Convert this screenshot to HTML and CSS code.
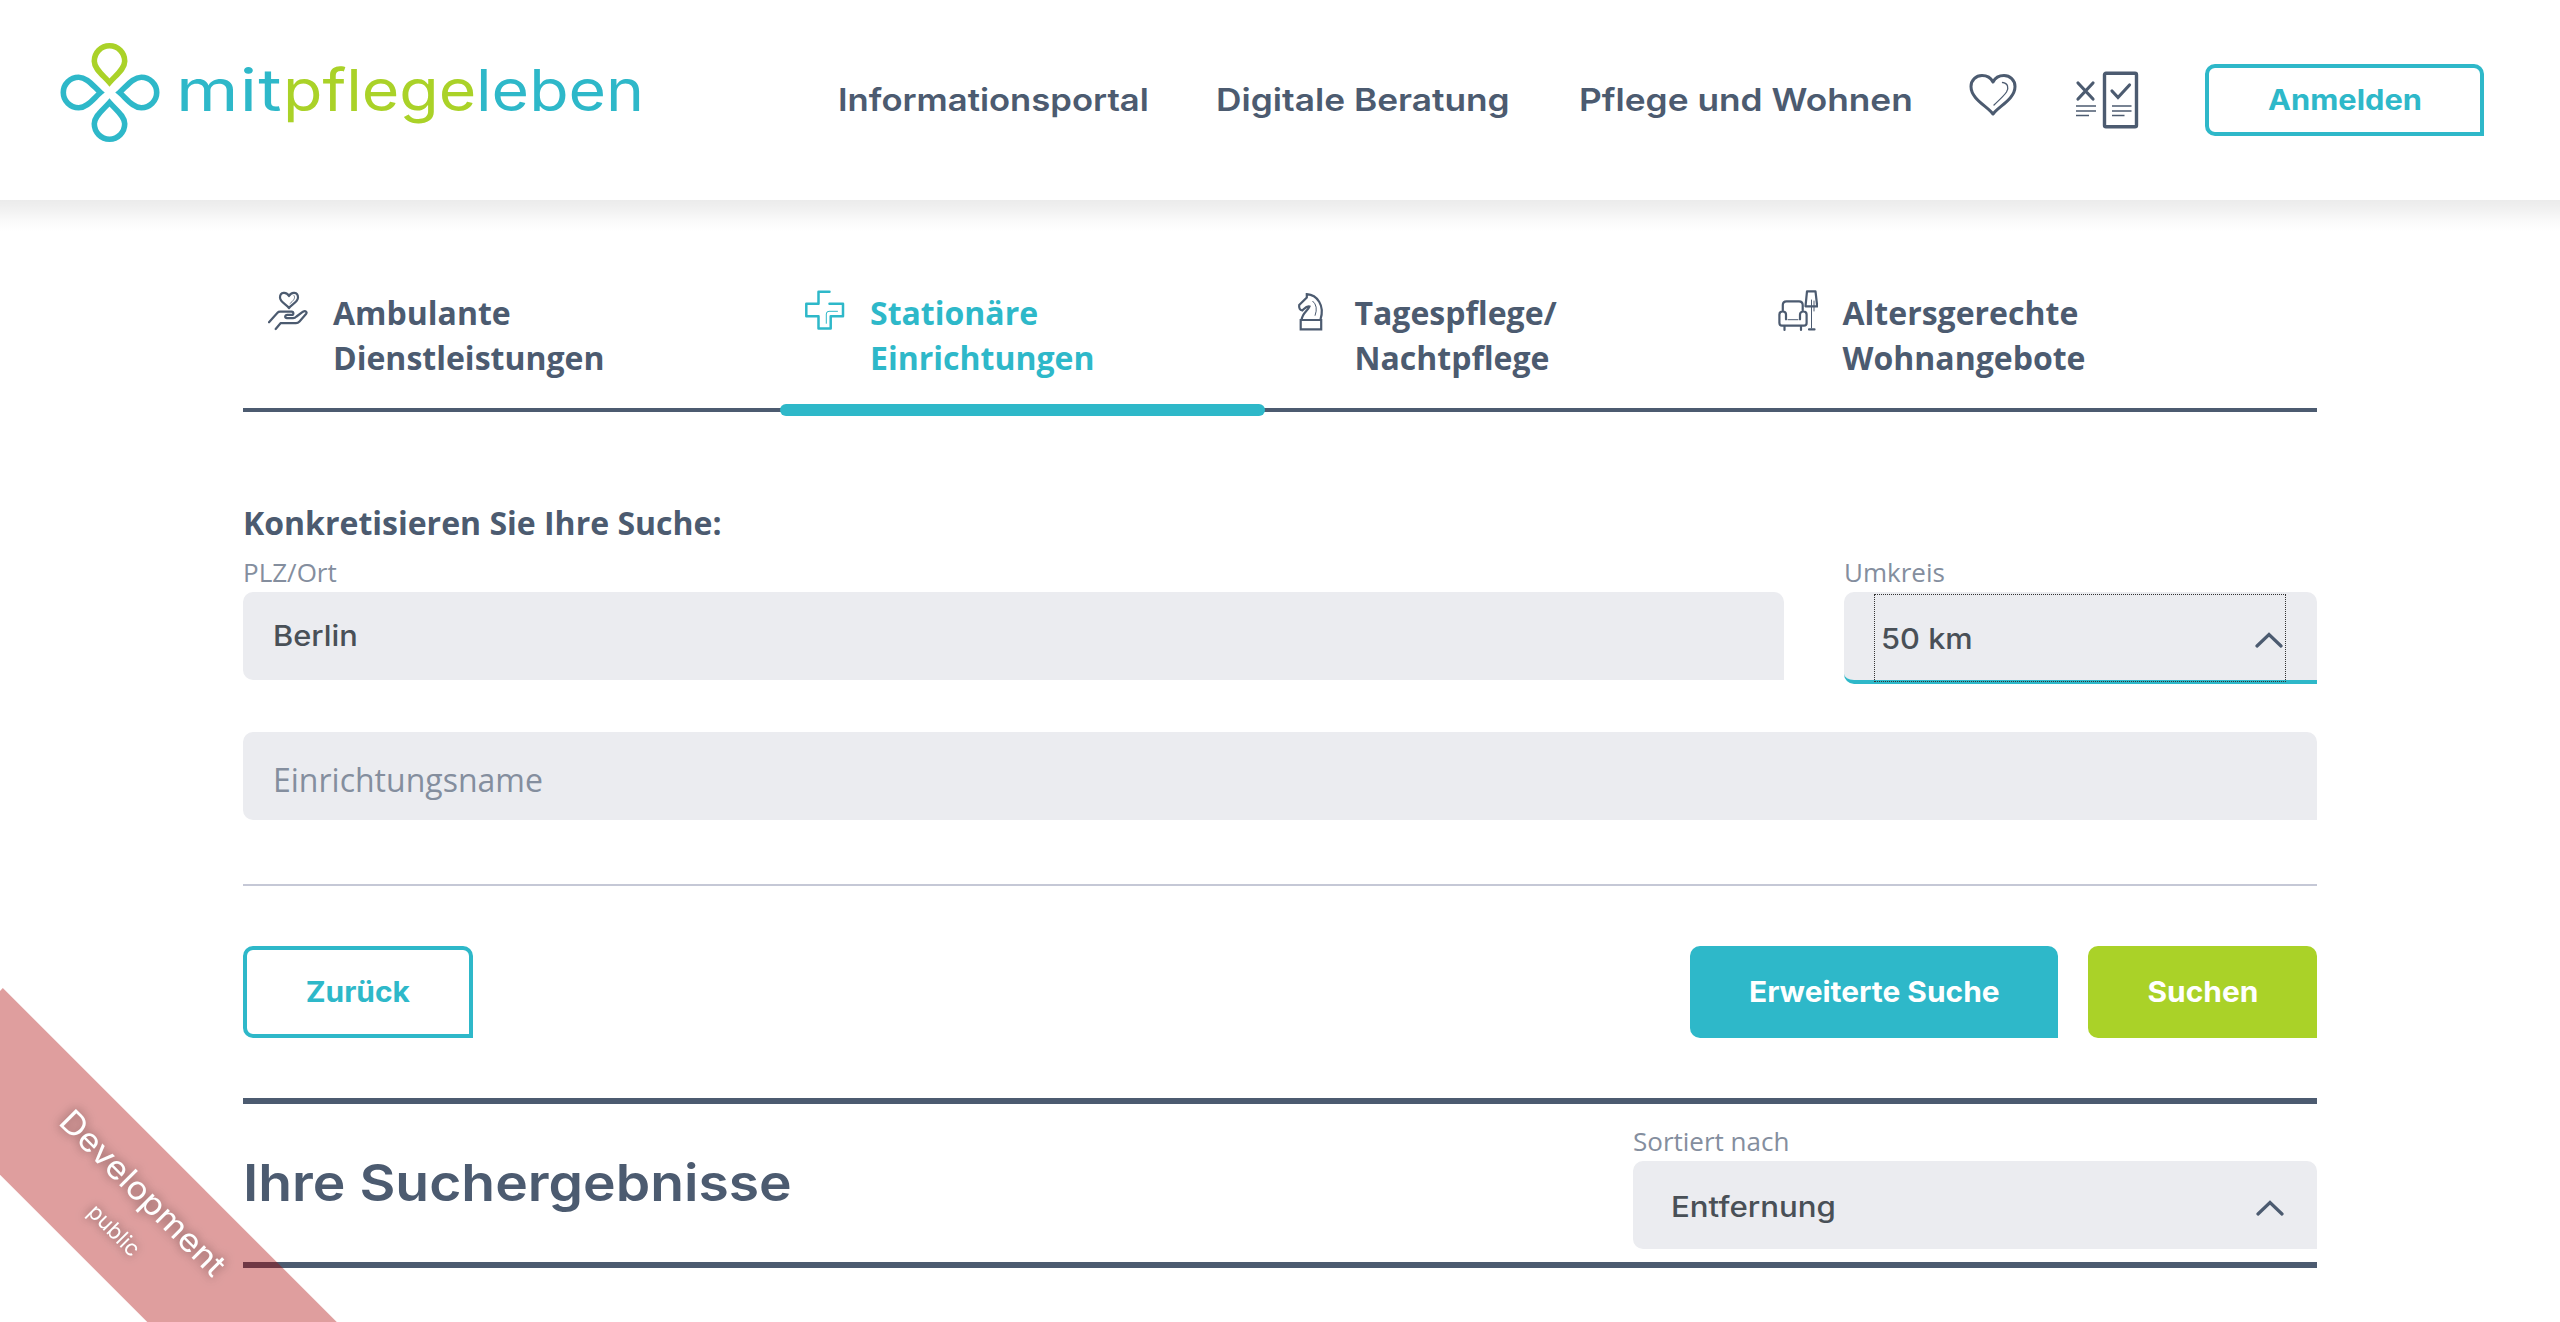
FILE: index.html
```html
<!DOCTYPE html>
<html lang="de">
<head>
<meta charset="utf-8">
<title>mitpflegeleben</title>
<link rel="stylesheet" href="styles.css">
</head>
<body>
<header class="header">
  <a class="logo" aria-label="mitpflegeleben">
    <svg class="logo-mark" viewBox="0 0 100 100" fill="none" stroke="#2eb8c9" stroke-width="5.6">
      <path stroke="#aad228" d="M49.5 39.5C43 32 34.300 26 34.300 18.200A15.200 15.400 0 0 1 64.700 18.200C64.700 26 56 32 49.500 39.500Z"/>
      <path d="M49.500 59.500C43 67 34.300 73 34.300 80.800A15.200 15.400 0 0 0 64.700 80.800C64.700 73 56 67 49.500 59.500Z"/>
      <path d="M40.500 49.500C33 43 27 34.300 18.700 34.300A15.400 15.200 0 0 0 18.700 64.700C27 64.700 33 56 40.500 49.500Z"/>
      <path d="M59.500 49.500C67 43 73 34.300 81.300 34.300A15.400 15.200 0 0 1 81.300 64.700C73 64.700 67 56 59.500 49.500Z"/>
    </svg>
    <span class="wordmark"><span class="word word-mit">mit</span><span class="word word-pflege">pflege</span><span class="word word-leben">leben</span></span>
  </a>
  <nav class="nav">
    <a class="nav-link nav-info">Informationsportal</a>
    <a class="nav-link nav-advice">Digitale Beratung</a>
    <a class="nav-link nav-living">Pflege und Wohnen</a>
  </nav>
  <svg class="icon-heart" viewBox="0 0 48 44" fill="none" stroke="#4c5b70" stroke-width="3" stroke-linejoin="round" stroke-linecap="round">
    <path d="M24 41C18 33 2 26 2 13.500C2 7 7 2.500 13 2.500C18 2.500 22 5 24 9C26 5 30 2.500 35 2.500C41 2.500 46 7 46 13.500C46 26 30 33 24 41Z"/>
    <path stroke-width="1.300" d="M33.500 9.500C39 10 40 15 37.500 19C34 24 29 28 25 32"/>
  </svg>
  <svg class="icon-compare" viewBox="0 0 64 60" fill="none" stroke="#4c5b70" stroke-linecap="round">
    <rect x="29.500" y="3.200" width="32" height="53.500" rx="1.500" stroke-width="3.400"/>
    <path stroke-width="3.200" d="M3 13l15 16M18 13L3 29M37 21l6 6.500L54.500 15"/>
    <path stroke-width="1.400" stroke-linecap="butt" d="M1 36h20M1 41h20M1 45.500h13M37 36h19.500M37 41h19.500M37 45.500h12.500"/>
  </svg>
  <a class="button button-login"><span class="wide">Anmelden</span></a>
</header>

<main class="main">
  <div class="tabs">
    <a class="tab">
      <svg class="tab-icon" viewBox="0 0 40 42" fill="none" stroke="currentColor" stroke-width="2.200" stroke-linejoin="round" stroke-linecap="round">
        <path d="M21 18C18.500 14.500 12 12 12 7.500C12 1.800 18.500 1.500 21 6C23.500 1.500 30 1.800 30 7.500C30 12 23.500 14.500 21 18Z"/>
        <path stroke-width=".8" d="M26 5.500C28 8 25 11 22 13.500"/>
        <path d="M1 32.300L9.500 22.800Q10.500 21.700 12 21.700H23.500C26 22 26 24.800 23.500 24.900H19.500C16.500 25.200 16.500 28 19 28.200H25Q27 28 28.500 26.500L35 21.700C37.500 20.300 39.500 22 38 24L31.500 31.500Q30 33.200 28 33.200H12.500L7.700 39"/>
      </svg>
      <span class="tab-label">Ambulante<br>Dienstleistungen</span>
    </a>
    <a class="tab tab-active">
      <svg class="tab-icon" viewBox="0 0 40 42" fill="none" stroke="currentColor" stroke-width="2.500" stroke-linejoin="round" stroke-linecap="round">
        <path d="M24.500 1.800H13.500V13.800H1.300V26.300H13.500V38.400H25.700V26.300H38V13.800H24.500"/>
        <path stroke-width="1" d="M32.500 21.300H24Q21.300 21.300 21.300 24V33.300"/>
      </svg>
      <span class="tab-label">Stationäre<br>Einrichtungen</span>
    </a>
    <a class="tab">
      <svg class="tab-icon" viewBox="0 0 40 42" fill="none" stroke="currentColor" stroke-width="2.200">
        <path d="M11.500 30.500C12 23 18 21 19.500 16.500C17 15.500 15.500 17.500 12.300 20.500C10 20 8.800 18 9.200 15L16.800 7.500V4.200C27 5 35 15 30.500 29.500M10.700 30h20.500v9.300h-20.500Z"/>
        <path stroke-width="1" d="M22.500 11Q28.500 16 25 25.700"/>
      </svg>
      <span class="tab-label">Tagespflege/<br>Nachtpflege</span>
    </a>
    <a class="tab">
      <svg class="tab-icon" viewBox="0 0 40 42" fill="none" stroke="currentColor" stroke-width="2.200" stroke-linejoin="round" stroke-linecap="round">
        <path d="M4.800 20.500V15Q4.800 11.400 8.500 11.400H21Q24.700 11.400 24.700 15V20.500M8 29.300V24.500C8 20.500 1.400 20.500 1.400 24.500V33Q1.400 35.700 4 35.700H26Q28.600 35.700 28.600 33V24.500C28.600 20.500 22 20.500 22 24.500V29.300M6.500 36.500V40M23 36.500V40M29 1.300H37.500L39.200 16.300H27.500ZM31 39.400H36.500"/>
        <path stroke-width="1" d="M10 29.700H20M33.500 10V38M36 11V21"/>
      </svg>
      <span class="tab-label">Altersgerechte<br>Wohnangebote</span>
    </a>
  </div>

  <h2 class="form-title">Konkretisieren Sie Ihre Suche:</h2>
  <div class="row">
    <label class="field field-place">
      <span class="field-label">PLZ/Ort</span>
      <span class="control"><span class="value">Berlin</span></span>
    </label>
    <label class="field field-radius">
      <span class="field-label">Umkreis</span>
      <span class="control control-focus">
        <span class="focus-ring"><span class="value">50 km</span>
          <svg class="chevron" viewBox="0 0 28 16"><path d="M2 14L14 2.500L26 14"/></svg>
        </span>
      </span>
    </label>
  </div>
  <div class="control control-name">Einrichtungsname</div>
  <hr class="divider">
  <div class="actions">
    <a class="button button-back"><span class="wide">Zurück</span></a>
    <a class="button button-more"><span class="wide">Erweiterte Suche</span></a>
    <a class="button button-search"><span class="wide">Suchen</span></a>
  </div>
  <section class="results">
    <h1 class="results-title">Ihre Suchergebnisse</h1>
    <label class="field field-sort">
      <span class="field-label">Sortiert nach</span>
      <span class="control control-sort"><span class="value">Entfernung</span>
        <svg class="chevron" viewBox="0 0 28 16"><path d="M2 14L14 2.500L26 14"/></svg>
      </span>
    </label>
  </section>
</main>

<div class="overlay">
  <div class="ribbon"><span class="ribbon-title">Development</span><span class="ribbon-sub">public</span></div>
</div>
</body>
</html>
```
FILE: styles.css
```css
* { box-sizing: border-box; }

body {
  margin: 0;
  background: #fff;
  color: #4c5b70;
  font-family: "Open Sans", sans-serif;
  font-size: 32px;
}

.header {
  position: relative;
  display: flex;
  align-items: flex-start;
  height: 200px;
  padding: 43px 76px 0 60px;
  background: #fff;
  font-family: Inter, sans-serif;
}

.header::after {
  content: "";
  position: absolute;
  top: 100%;
  right: 0;
  left: 0;
  height: 32px;
  background: linear-gradient(rgba(0, 0, 0, .08), rgba(0, 0, 0, .055) 30%, rgba(0, 0, 0, .024) 62%, transparent);
}

.logo {
  display: flex;
  width: 778px;
}

.logo-mark {
  width: 100px;
  height: 100px;
}

.wordmark {
  display: flex;
  margin: 12px 0 0 16px;
  color: #2eb8c9;
  font-size: 58px;
  line-height: 70px;
}

.word {
  transform: scaleX(1.11);
  transform-origin: left;
}

.word-mit {
  width: 107px;
  transform: scaleX(1.23);
  letter-spacing: 1px;
}

.word-pflege {
  width: 193px;
  color: #aad228;
}

.word-leben { width: 167px; }

.nav {
  display: flex;
  margin-top: 37px;
  font-size: 31.500px;
  font-weight: 600;
  line-height: 40px;
  white-space: nowrap;
}

.nav-link {
  transform: scaleX(1.12);
  transform-origin: left;
}

.nav-info {
  width: 378px;
  transform: scaleX(1.1);
}

.nav-advice { width: 363px; }
.nav-living { width: 390px; }

.icon-heart {
  width: 48px;
  height: 44px;
  margin-top: 30px;
}

.icon-compare {
  width: 64px;
  height: 60px;
  margin: 27px 0 0 58px;
}

.button {
  display: flex;
  align-items: center;
  justify-content: center;
  border-radius: 10px 10px 0 10px;
  font-family: Inter, sans-serif;
  font-size: 28px;
  font-weight: 700;
  white-space: nowrap;
}

.wide { transform: scaleX(1.068); }

.button-login {
  width: 279px;
  height: 72px;
  margin: 21px 0 0 auto;
  border: 4px solid #2eb8c9;
  color: #2eb8c9;
}

.button-login .wide { transform: scaleX(1.1); }

.main {
  width: 2074px;
  margin-left: 243px;
}

.tabs {
  display: grid;
  grid-template-columns: 537px 484.500px 488px 564.500px;
  height: 212px;
  padding-top: 90px;
  border-bottom: 4px solid #4c5b70;
}

.tab {
  position: relative;
  display: flex;
  padding-left: 25px;
  gap: 25px;
}

.tab-icon {
  width: 40px;
  height: 42px;
}

.tab-label {
  font-weight: 700;
  line-height: 45px;
}

.tab-active { color: #2eb8c9; }

.tab-active::after {
  content: "";
  position: absolute;
  right: 0;
  bottom: -8px;
  left: 0;
  height: 12px;
  border-radius: 6px;
  background: #2eb8c9;
}

.form-title {
  margin: 89px 0 0;
  font-size: 32px;
  line-height: 44px;
}

.row {
  display: flex;
  gap: 60px;
  margin-top: 9px;
}

.field { display: block; }
.field-place { width: 1541px; }
.field-radius { width: 473px; }
.field-sort { width: 684px; }

.field-label {
  display: block;
  height: 38px;
  color: #848e9e;
  font-size: 26px;
  line-height: 36px;
}

.control {
  display: flex;
  align-items: center;
  height: 88px;
  padding: 0 30px;
  border-radius: 10px 10px 0 10px;
  background: #ebecf0;
  color: #495057;
  font-family: Inter, sans-serif;
  font-size: 28px;
  font-weight: 500;
}

.value {
  transform: scaleX(1.1);
  transform-origin: left;
}

.control-focus {
  height: 92px;
  border-bottom: 4px solid #2eb8c9;
}

.focus-ring {
  display: flex;
  flex: 1;
  align-items: center;
  justify-content: space-between;
  height: 88px;
  margin: 4px 1px 0 0;
  padding: 2px 2px 0 6px;
  border: 1px dotted #333;
}

.chevron {
  width: 28px;
  height: 16px;
  margin-top: 2px;
  fill: none;
  stroke: #4c5b70;
  stroke-width: 3.200;
  stroke-linecap: round;
}

.control-name {
  margin-top: 48px;
  padding-top: 6px;
  color: #848e9e;
  font-family: "Open Sans", sans-serif;
  font-size: 32px;
  font-weight: 400;
}

.divider {
  height: 2px;
  margin: 64px 0 60px;
  border: 0;
  background: #c5c8d6;
}

.actions {
  display: flex;
  gap: 30px;
}

.actions .button { height: 92px; }

.button-back {
  width: 230px;
  margin-right: auto;
  border: 4px solid #2eb8c9;
  color: #2eb8c9;
}

.button-more {
  width: 368px;
  background: #2eb8c9;
  color: #fff;
}

.button-search {
  width: 229px;
  background: #aad228;
  color: #fff;
}

.results {
  display: flex;
  justify-content: space-between;
  height: 170px;
  margin-top: 60px;
  padding-top: 19px;
  border-top: 6px solid #4c5b70;
  border-bottom: 6px solid #4c5b70;
}

.results-title {
  margin: 28px 0 0;
  font-family: Inter, sans-serif;
  font-size: 51px;
  font-weight: 600;
  line-height: 64px;
  transform: scaleX(1.083);
  transform-origin: left;
}

.control-sort {
  justify-content: space-between;
  padding: 4px 33px 0 38px;
}

.control-sort .value { transform: scaleX(1.115); }

.overlay {
  position: fixed;
  inset: 0;
  overflow: hidden;
  pointer-events: none;
}

.ribbon {
  position: absolute;
  left: -116.500px;
  top: 1140.700px;
  display: flex;
  flex-direction: column;
  align-items: center;
  gap: 8px;
  width: 488px;
  height: 134px;
  padding-top: 25px;
  background: rgba(170, 0, 0, .38);
  color: #fff;
  font-family: Inter, sans-serif;
  text-shadow: 0 0 10px rgba(0, 0, 0, .5);
  transform: rotate(45deg);
}

.ribbon-title {
  font-size: 32px;
  line-height: 42px;
  transform: scaleX(1.1);
}

.ribbon-sub {
  padding-left: 12px;
  font-size: 22px;
  line-height: 34px;
}
```
